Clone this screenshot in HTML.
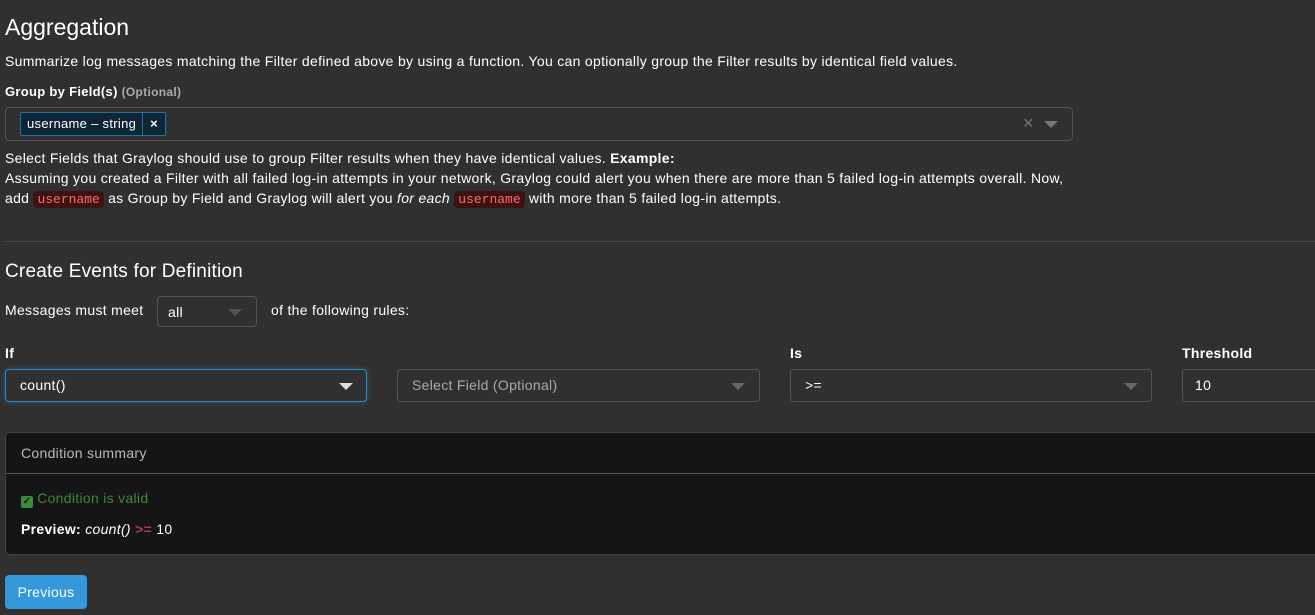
<!DOCTYPE html>
<html><head><style>
*{box-sizing:border-box;margin:0;padding:0}
body{width:1315px;height:615px;overflow:hidden;background:#303030;color:#fff;font-family:"Liberation Sans",sans-serif;font-size:14px;letter-spacing:0.3px;position:relative}
.a{position:absolute;white-space:nowrap}
.sel{position:absolute;border:1px solid #555;border-radius:4px;background:#303030;height:33px}
.car{position:absolute;width:0;height:0;border-left:7px solid transparent;border-right:7px solid transparent;border-top:7px solid #666;top:13px}
code{font-family:"Liberation Mono",monospace;font-size:13px;color:#ff6b6b;background:#3d1212;border-radius:4px;padding:1px 4px;letter-spacing:0}
</style></head><body>
<div class="a" style="left:5px;top:14px;font-size:23px;letter-spacing:0">Aggregation</div>
<div class="a" style="left:5px;top:53px">Summarize log messages matching the Filter defined above by using a function. You can optionally group the Filter results by identical field values.</div>
<div class="a" style="left:5px;top:84px;font-size:13px;font-weight:bold">Group by Field(s) <span style="color:#aaa;font-size:12px">(Optional)</span></div>
<div class="sel" style="left:5px;top:107px;width:1068px;height:34px">
 <div class="a" style="left:14px;top:4px;height:24px;border:1px solid #2a6f9c;background:#0e2535;border-radius:2px;display:flex;font-size:13px">
  <span style="padding:3px 6px">username – string</span><span style="border-left:1px solid #2a6f9c;padding:3px 7px;font-weight:bold">×</span></div>
 <div class="a" style="left:1017px;top:5px;color:#777;font-size:18px">×</div>
 <div class="car" style="left:1038px;top:13px;border-top-color:#777"></div>
</div>
<div class="a" style="left:5px;top:148px;line-height:20px;white-space:normal;width:1075px">Select Fields that Graylog should use to group Filter results when they have identical values. <b>Example:</b><br>Assuming you created a Filter with all failed log-in attempts in your network, Graylog could alert you when there are more than 5 failed log-in attempts overall. Now, add <code>username</code> as Group by Field and Graylog will alert you <i>for each</i> <code>username</code> with more than 5 failed log-in attempts.</div>
<div class="a" style="left:5px;top:241px;width:1310px;height:1px;background:#4a4a4a"></div>
<div class="a" style="left:5px;top:261px;font-size:19px;letter-spacing:0.2px">Create Events for Definition</div>
<div class="a" style="left:5px;top:302px">Messages must meet</div>
<div class="sel" style="left:157px;top:296px;width:100px;height:31px"><div class="a" style="left:10px;top:7px">all</div><div class="car" style="left:70px;top:12px;border-top-color:#555"></div></div>
<div class="a" style="left:271px;top:302px">of the following rules:</div>
<div class="a" style="left:5px;top:345px;font-weight:bold">If</div>
<div class="a" style="left:790px;top:345px;font-weight:bold">Is</div>
<div class="a" style="left:1182px;top:345px;font-weight:bold">Threshold</div>
<div class="sel" style="left:5px;top:369px;width:362px;border-color:#2f86c6;box-shadow:0 0 6px rgba(47,134,198,.5)"><div class="a" style="left:14px;top:7px">count()</div><div class="car" style="left:333px;border-top-color:#ddd"></div></div>
<div class="sel" style="left:397px;top:369px;width:363px"><div class="a" style="left:14px;top:7px;color:#aaa">Select Field (Optional)</div><div class="car" style="left:333px"></div></div>
<div class="sel" style="left:790px;top:369px;width:362px"><div class="a" style="left:14px;top:7px">&gt;=</div><div class="car" style="left:333px"></div></div>
<div class="sel" style="left:1182px;top:369px;width:150px"><div class="a" style="left:12px;top:7px">10</div></div>
<div class="a" style="left:5px;top:432px;width:1320px;height:123px;background:#151515;border:1px solid #444;border-radius:4px">
 <div class="a" style="left:0;top:0;width:100%;height:41px;border-bottom:1px solid #555"></div>
 <div class="a" style="left:15px;top:12px;color:#bbb">Condition summary</div>
 <div class="a" style="left:15px;top:57px;color:#3c8a3c"><span style="display:inline-block;width:12px;height:12px;background:#3c8a3c;border-radius:2px;vertical-align:-1px;color:#151515;font-size:10px;line-height:12px;text-align:center;font-weight:bold;letter-spacing:0">✓</span> Condition is valid</div>
 <div class="a" style="left:15px;top:88px"><b>Preview:</b> <i>count()</i> <span style="color:#b0306a;font-weight:bold">&gt;=</span> 10</div>
</div>
<div class="a" style="left:5px;top:575px;width:82px;height:34px;background:#3498db;border-radius:4px;text-align:center;line-height:34px">Previous</div>
</body></html>
